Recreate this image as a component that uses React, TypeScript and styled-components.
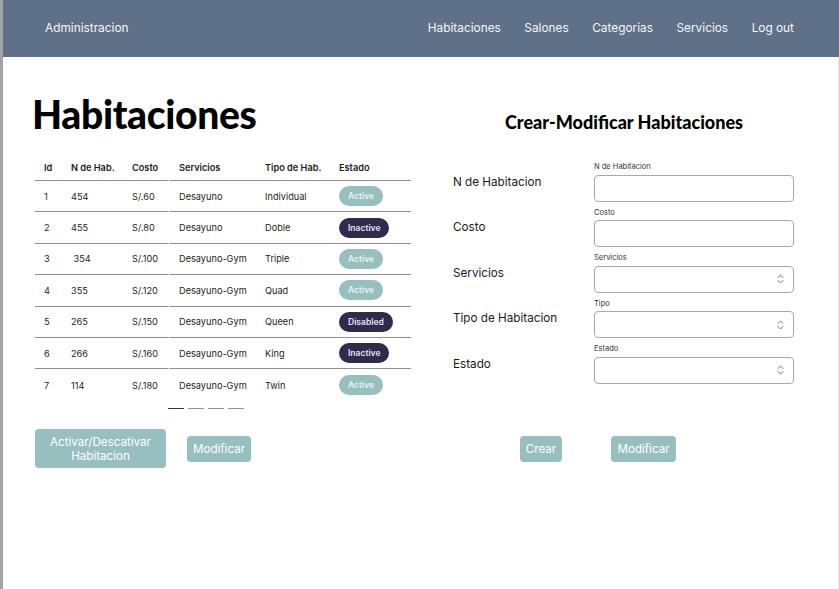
import React from "react";
import styled, { createGlobalStyle } from "styled-components";

interface Room {
    id: number;
    number: string;
    cost: string;
    services: string;
    type: string;
    status: "Active" | "Inactive" | "Disabled";
}

const rooms: Room[] = [
    { id: 1, number: "454", cost: "S/.60", services: "Desayuno", type: "Individual", status: "Active" },
    { id: 2, number: "455", cost: "S/.80", services: "Desayuno", type: "Doble", status: "Inactive" },
    { id: 3, number: "\u00a0354", cost: "S/.100", services: "Desayuno-Gym", type: "Triple", status: "Active" },
    { id: 4, number: "355", cost: "S/.120", services: "Desayuno-Gym", type: "Quad", status: "Active" },
    { id: 5, number: "265", cost: "S/.150", services: "Desayuno-Gym", type: "Queen", status: "Disabled" },
    { id: 6, number: "266", cost: "S/.160", services: "Desayuno-Gym", type: "King", status: "Inactive" },
    { id: 7, number: "114", cost: "S/.180", services: "Desayuno-Gym", type: "Twin", status: "Active" }
];

const navLinks = ["Habitaciones", "Salones", "Categorias", "Servicios", "Log out"];

const fields = [
    { label: "N de Habitacion", hint: "N de Habitacion", select: false },
    { label: "Costo", hint: "Costo", select: false },
    { label: "Servicios", hint: "Servicios", select: true },
    { label: "Tipo de Habitacion", hint: "Tipo", select: true },
    { label: "Estado", hint: "Estado", select: true }
];

const GlobalStyle = createGlobalStyle`
body {
    margin: 0;
    background: #fff;
    font-family: Inter, "Liberation Sans", sans-serif;
}
* { box-sizing: border-box; }
`;

const Page = styled.div`
min-height: 589px;
border-left: 3px solid #a3a3a3;
display: flex;
flex-direction: column;
`;

const Header = styled.header`
height: 57px;
background: #5f7089;
display: flex;
align-items: center;
justify-content: space-between;
padding: 0 45px 1px 42px;
color: #f4f6f9;
font-size: 11.85px;
`;

const Nav = styled.nav`
display: flex;
`;

const NavLink = styled.a`
color: inherit;
text-decoration: none;
margin-left: 23.5px;
`;

const Main = styled.main`
flex: 1;
border-right: 1px solid #e6e6e6;
display: grid;
grid-template-columns: 385px 1fr;
grid-template-rows: auto auto;
align-content: start;
padding-left: 32px;
`;

const LeftColumn = styled.section`
padding-top: 34px;
`;

const RightColumn = styled.section`
padding-top: 54px;
padding-left: 33px;
`;

const Title = styled.h1`
margin: 0 0 18px -3px;
font-family: Lato, "Noto Sans", sans-serif;
font-weight: 900;
font-size: 39px;
line-height: 46px;
letter-spacing: -0.35px;
color: #000;
`;

const FormTitle = styled.h2`
margin: 0 0 23px 52px;
font-family: Lato, "Noto Sans", sans-serif;
font-weight: 900;
font-size: 18px;
line-height: 22px;
color: #000;
`;

const Table = styled.table`
border-collapse: separate;
border-spacing: 0;
width: 376px;
font-size: 9.2px;
color: #1c1c1c;
`;

const HeadCell = styled.th<{ $gap?: boolean; $w: number }>`
text-align: left;
font-weight: 600;
padding: 0 0 0 9px;
height: 26px;
width: ${(p) => p.$w}px;
border-bottom: 1.5px solid #8f8f8f;
border-left: ${(p) => (p.$gap ? "2px solid #fff" : "none")};
`;

const Cell = styled.td<{ $gap?: boolean; $last?: boolean }>`
padding: 0 0 0 9px;
height: 31.4px;
border-bottom: ${(p) => (p.$last ? "none" : "1.5px solid #8f8f8f")};
border-left: ${(p) => (p.$gap ? "2px solid #fff" : "none")};
white-space: nowrap;
`;

const Badge = styled.span<{ $dark: boolean }>`
display: inline-flex;
align-items: center;
height: 20px;
padding: 0 9px;
border-radius: 10px;
font-size: 8.5px;
font-weight: 600;
background: ${(p) => (p.$dark ? "#2f2b4e" : "#97bfbf")};
color: ${(p) => (p.$dark ? "#e4e3ee" : "#e9f3f3")};
`;

const Pager = styled.div`
display: flex;
gap: 4px;
padding: 7px 0 0 133px;
`;

const PagerDash = styled.span<{ $active: boolean }>`
width: 16px;
height: 1.5px;
background: ${(p) => (p.$active ? "#2f3250" : "#8d93b3")};
`;

const ButtonRow = styled.div<{ $pad: number; $gap: number }>`
display: flex;
align-items: center;
height: 39px;
gap: ${(p) => p.$gap}px;
margin-top: 20px;
padding-left: ${(p) => p.$pad}px;
`;

const Button = styled.button<{ $w: number; $h: number }>`
width: ${(p) => p.$w}px;
height: ${(p) => p.$h}px;
border: none;
border-radius: 4px;
background: #97bfbf;
color: #fff;
font-family: Inter, "Liberation Sans", sans-serif;
font-size: 11.6px;
line-height: 14px;
padding: 0 4px;
`;

const Form = styled.div`
display: grid;
grid-template-columns: 141px 200px;
`;

const FieldLabel = styled.label`
font-size: 11.7px;
color: #1a1a1a;
align-self: center;
padding-top: 6px;
`;

const FieldBox = styled.div`
display: flex;
flex-direction: column;
`;

const Hint = styled.span`
font-size: 7.5px;
line-height: 10px;
color: #333;
margin: 6px 0 2.5px;
`;

const InputBox = styled.div`
height: 27px;
border: 1px solid #a9a9a9;
border-radius: 4px;
display: flex;
align-items: center;
justify-content: flex-end;
padding-right: 9px;
`;

const Chevrons = () => (
    <svg width="7" height="10" viewBox="0 0 7 10" fill="none" stroke="#777" strokeWidth="1" strokeLinecap="round" strokeLinejoin="round">
        <path d="M1 3.5 L3.5 1 L6 3.5" />
        <path d="M1 6.5 L3.5 9 L6 6.5" />
    </svg>
);

const columns = [
    { title: "Id", w: 27 },
    { title: "N de Hab.", w: 61 },
    { title: "Costo", w: 45 },
    { title: "Servicios", w: 88, gap: true },
    { title: "Tipo de Hab.", w: 74 },
    { title: "Estado", w: 81 }
];

const App: React.FC = () => {
    return (
        <>
            <GlobalStyle />
            <Page>
                <Header>
                    <span>Administracion</span>
                    <Nav>
                        {navLinks.map((link) => (
                            <NavLink key={link} href="#">{link}</NavLink>
                        ))}
                    </Nav>
                </Header>
                <Main>
                    <LeftColumn>
                        <Title>Habitaciones</Title>
                        <Table>
                            <thead>
                                <tr>
                                    {columns.map((c) => (
                                        <HeadCell key={c.title} $w={c.w} $gap={c.gap}>{c.title}</HeadCell>
                                    ))}
                                </tr>
                            </thead>
                            <tbody>
                                {rooms.map((room, i) => {
                                    const last = i === rooms.length - 1;
                                    return (
                                        <tr key={room.id}>
                                            <Cell $last={last}>{room.id}</Cell>
                                            <Cell $last={last}>{room.number}</Cell>
                                            <Cell $last={last}>{room.cost}</Cell>
                                            <Cell $last={last} $gap>{room.services}</Cell>
                                            <Cell $last={last}>{room.type}</Cell>
                                            <Cell $last={last}>
                                                <Badge $dark={room.status !== "Active"}>{room.status}</Badge>
                                            </Cell>
                                        </tr>
                                    );
                                })}
                            </tbody>
                        </Table>
                        <Pager>
                            {[0, 1, 2, 3].map((n) => (
                                <PagerDash key={n} $active={n === 0} />
                            ))}
                        </Pager>
                    </LeftColumn>
                    <RightColumn>
                        <FormTitle>Crear-Modificar Habitaciones</FormTitle>
                        <Form>
                            {fields.map((f) => (
                                <React.Fragment key={f.label}>
                                    <FieldLabel>{f.label}</FieldLabel>
                                    <FieldBox>
                                        <Hint>{f.hint}</Hint>
                                        <InputBox>{f.select && <Chevrons />}</InputBox>
                                    </FieldBox>
                                </React.Fragment>
                            ))}
                        </Form>
                    </RightColumn>
                    <ButtonRow $pad={0} $gap={21}>
                        <Button $w={131} $h={39}>Activar/Descativar Habitacion</Button>
                        <Button $w={64} $h={26}>Modificar</Button>
                    </ButtonRow>
                    <ButtonRow $pad={100} $gap={49}>
                        <Button $w={42} $h={26}>Crear</Button>
                        <Button $w={65} $h={26}>Modificar</Button>
                    </ButtonRow>
                </Main>
            </Page>
        </>
    );
};

export default App;
